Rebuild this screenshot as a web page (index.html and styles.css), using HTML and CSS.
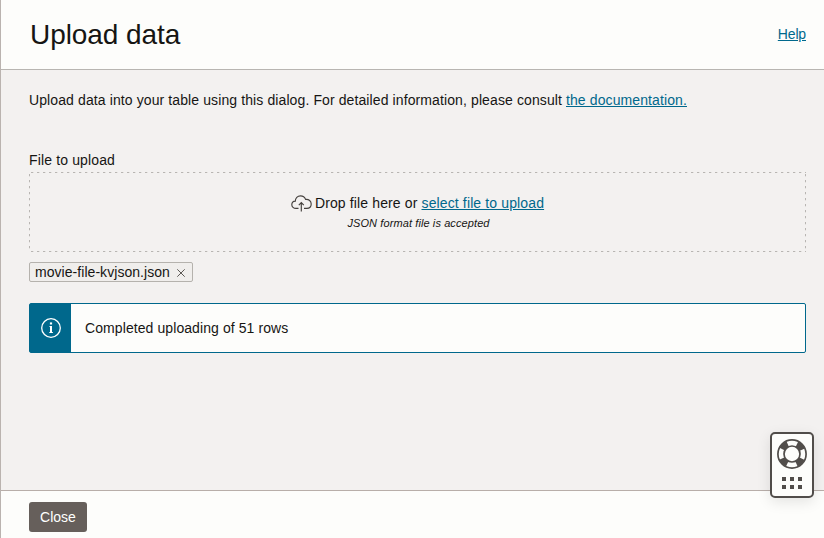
FILE: index.html
```html
<!DOCTYPE html>
<html lang="en">
<head>
<meta charset="utf-8">
<title>Upload data</title>
<link rel="stylesheet" href="styles.css">
</head>
<body>
<div class="dialog">
  <header class="header">
    <h1 class="title">Upload data</h1>
    <a class="link help" href="#">Help</a>
  </header>
  <main class="content">
    <p class="intro">Upload data into your table using this dialog. For detailed information, please consult <a class="link" href="#">the documentation.</a></p>
    <div class="label">File to upload</div>
    <div class="dropzone">
      <div class="drop-line">
        <svg class="cloud" width="21" height="17" viewBox="0 0 21 17" fill="none" stroke="#45413e" stroke-width="1.15">
          <path d="M7.5 13.4H5C2.6 13.4 .8 11.8 .8 9.7C.8 7.7 2.2 6.2 4.3 6.1C4.3 3 6.5 .8 9.5 .8C12 .8 13.8 2.2 14.6 4.4C17.9 4 20.2 6.1 20.2 9C20.2 11.6 18.4 13.4 15.8 13.4H13"/>
          <path d="M10.3 16.5V7.6M7.8 10.2L10.3 7.6L12.8 10.2"/>
        </svg>
        <span class="drop-text">Drop file here or <a class="link" href="#">select file to upload</a></span>
      </div>
      <div class="hint">JSON format file is accepted</div>
    </div>
    <div class="chip">
      <span class="chip-text">movie-file-kvjson.json</span>
      <svg width="8" height="8" viewBox="0 0 8 8" stroke="#4a4643" stroke-width=".9"><path d="M.3 .3L7.7 7.7M7.7 .3L.3 7.7"/></svg>
    </div>
    <div class="message">
      <div class="message-icon">
        <svg width="20" height="20" viewBox="0 0 20 20" fill="none" stroke="#fff">
          <circle cx="10" cy="10" r="9.3" stroke-width="1.3"/>
          <path d="M8.5 8.5H10M8.3 14.5H11.9" stroke-width="1"/>
          <path d="M10 8V14.5" stroke-width="2"/>
          <path d="M10 4.4V6.5" stroke-width="2.2"/>
        </svg>
      </div>
      <div class="message-text">Completed uploading of 51 rows</div>
    </div>
  </main>
  <footer class="footer"><button class="close">Close</button></footer>
</div>
<div class="support">
  <svg width="30" height="30" viewBox="0 0 30 30" fill="none" stroke="#514d4a">
    <circle cx="15" cy="15" r="10.9" stroke-width="6" stroke-dasharray="7.6 9.522" stroke-dashoffset="-4.761"/>
    <circle cx="15" cy="15" r="14.1" stroke-width="1.7"/>
    <circle cx="15" cy="15" r="8" stroke-width="1.7"/>
  </svg>
  <svg width="20" height="12" viewBox="0 0 20 12" fill="#514d4a">
    <path d="M0 0h4v4H0zM8 0h4v4H8zM16 0h4v4h-4zM0 8h4v4H0zM8 8h4v4H8zM16 8h4v4h-4z"/>
  </svg>
</div>
</body>
</html>
```
FILE: styles.css
```css
* { box-sizing: border-box; }
body {
  margin: 0;
  font: 14px/20px "Liberation Sans", Arial, sans-serif;
  color: #161513;
  background: #f3f1f0;
}
.dialog {
  height: 538px;
  display: flex;
  flex-direction: column;
  border-left: 1px solid #bab3af;
}
.header {
  height: 70px;
  flex: none;
  display: flex;
  align-items: center;
  justify-content: space-between;
  padding: 0 18px 0 28px;
  background: #fdfdfb;
  border-bottom: 1px solid #b8b5b1;
}
.title {
  margin: 0 0 0 1px;
  font-size: 28px;
  line-height: 36px;
  font-weight: 400;
  letter-spacing: -.08px;
}
.help { margin-bottom: 2px; letter-spacing: -.15px; }
.link { color: #00688c; text-decoration: underline; }
.content { flex: 1; padding: 20px 18px 0 28px; }
.intro { margin: 0 0 40px; letter-spacing: .106px; }
.label { margin-bottom: 2px; letter-spacing: .14px; }
.dropzone {
  height: 80px;
  padding-top: 21px;
  display: flex;
  flex-direction: column;
  align-items: center;
  background:
    repeating-linear-gradient(90deg, #b8b5b2 0 2px, #e2e0de 2px 3px, transparent 3px 6px) 2px 0 / 100% 1px no-repeat,
    repeating-linear-gradient(90deg, #b8b5b2 0 2px, #e2e0de 2px 3px, transparent 3px 6px) 2px 100% / 100% 1px no-repeat,
    repeating-linear-gradient(#b8b5b2 0 2px, #e2e0de 2px 3px, transparent 3px 6px) 0 2px / 1px 100% no-repeat,
    repeating-linear-gradient(#b8b5b2 0 2px, #e2e0de 2px 3px, transparent 3px 6px) 100% 2px / 1px 100% no-repeat;
}
.drop-line { display: flex; align-items: center; gap: 3px; }
.drop-text { letter-spacing: .13px; }
.cloud { margin-top: 1px; }
.hint { font-size: 11px; font-style: italic; margin-left: 2px; letter-spacing: .1px; }
.chip {
  width: 164px;
  height: 20px;
  margin-top: 10px;
  padding: 0 7px 0 5px;
  display: flex;
  align-items: center;
  justify-content: space-between;
  line-height: 18px;
  background: #f0eeec;
  border: 1px solid #b5b2ad;
  border-radius: 2px;
}
.chip svg { margin-top: 1px; }
.chip-text { letter-spacing: .05px; }
.message {
  height: 50px;
  margin-top: 21px;
  display: flex;
  background: #fdfdfb;
  border: 1px solid #00688c;
  border-radius: 2px;
}
.message-icon {
  width: 41px;
  display: flex;
  align-items: center;
  justify-content: center;
  background: #00688c;
}
.message-text { padding: 14px; letter-spacing: .085px; }
.footer {
  height: 48px;
  flex: none;
  padding: 11px 28px 0;
  background: #fdfdfb;
  border-top: 1px solid #b8aea9;
}
.close {
  display: block;
  width: 58px;
  height: 30px;
  padding: 0;
  border: 0;
  border-radius: 3px;
  background: #665f5b;
  color: #fff;
  font: inherit;
}
.support {
  position: absolute;
  left: 770px;
  top: 432px;
  width: 44px;
  height: 66px;
  padding-top: 5px;
  display: flex;
  flex-direction: column;
  align-items: center;
  gap: 8px;
  background: #fdfdfb;
  border: 2px solid #514d4a;
  border-radius: 5px;
  box-shadow: 0 4px 14px rgba(0, 0, 0, .1);
}
```
